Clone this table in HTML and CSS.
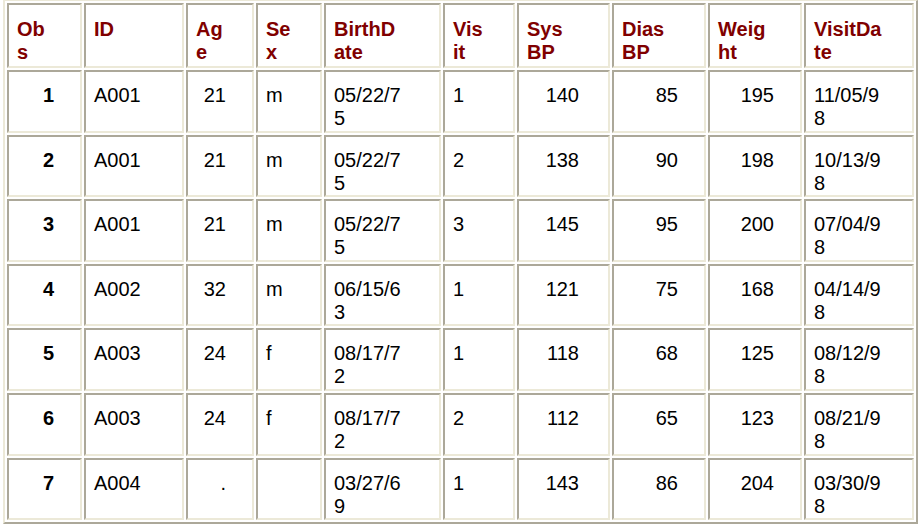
FILE: index.html
```html
<!DOCTYPE html>
<html>
<head>
<meta charset="utf-8">
<link rel="stylesheet" href="styles.css">
</head>
<body>
<table class="data">
  <colgroup>
    <col class="c-obs"><col class="c-id"><col class="c-age"><col class="c-sex"><col class="c-bd"><col class="c-visit"><col class="c-sys"><col class="c-dias"><col class="c-wt"><col class="c-vd">
  </colgroup>
  <thead>
    <tr class="head">
      <th>Obs</th><th>ID</th><th>Age</th><th>Sex</th><th class="bd">BirthDate</th><th>Visit</th><th class="sys">SysBP</th><th>DiasBP</th><th>Weight</th><th>VisitDate</th>
    </tr>
  </thead>
  <tbody>
    <tr><th class="obs">1</th><td>A001</td><td class="r">21</td><td>m</td><td class="bd">05/22/75</td><td>1</td><td class="r sys">140</td><td class="r">85</td><td class="r">195</td><td>11/05/98</td></tr>
    <tr><th class="obs">2</th><td>A001</td><td class="r">21</td><td>m</td><td class="bd">05/22/75</td><td>2</td><td class="r sys">138</td><td class="r">90</td><td class="r">198</td><td>10/13/98</td></tr>
    <tr><th class="obs">3</th><td>A001</td><td class="r">21</td><td>m</td><td class="bd">05/22/75</td><td>3</td><td class="r sys">145</td><td class="r">95</td><td class="r">200</td><td>07/04/98</td></tr>
    <tr><th class="obs">4</th><td>A002</td><td class="r">32</td><td>m</td><td class="bd">06/15/63</td><td>1</td><td class="r sys">121</td><td class="r">75</td><td class="r">168</td><td>04/14/98</td></tr>
    <tr><th class="obs">5</th><td>A003</td><td class="r">24</td><td>f</td><td class="bd">08/17/72</td><td>1</td><td class="r sys">118</td><td class="r">68</td><td class="r">125</td><td>08/12/98</td></tr>
    <tr><th class="obs">6</th><td>A003</td><td class="r">24</td><td>f</td><td class="bd">08/17/72</td><td>2</td><td class="r sys">112</td><td class="r">65</td><td class="r">123</td><td>08/21/98</td></tr>
    <tr><th class="obs">7</th><td>A004</td><td class="r">.</td><td></td><td class="bd">03/27/69</td><td>1</td><td class="r sys">143</td><td class="r">86</td><td class="r">204</td><td>03/30/98</td></tr>
  </tbody>
</table>
</body>
</html>
```

FILE: styles.css
```css
html, body {
  background: #ffffff;
}
body {
  margin: 0 0 0 3px;
  font-family: "Liberation Sans", Arial, sans-serif;
  font-size: 20px;
}
.data {
  table-layout: fixed;
  width: 915px;
  border-collapse: separate;
  border-spacing: 2px;
  border-style: solid;
  border-width: 1px 2px 2px 2px;
  border-color: #ece9d8 #aca899 #aca899 #ece9d8;
  background: #ffffff;
}
.c-obs { width: 75px; }
.c-id { width: 100px; }
.c-age { width: 68px; }
.c-sex { width: 66px; }
.c-bd { width: 117px; }
.c-visit { width: 72px; }
.c-sys { width: 93px; }
.c-dias { width: 94px; }
.c-wt { width: 94px; }
.c-vd { width: 110px; }

.data th, .data td {
  border-style: solid;
  border-width: 2px;
  border-color: #aca899 #ece9d8 #ece9d8 #aca899;
  padding: 12px 26px 0 8px;
  vertical-align: top;
  text-align: left;
  line-height: normal;
  word-break: break-all;
  overflow-wrap: anywhere;
  color: #000000;
  font-weight: normal;
}
.data .head {
  height: 65px;
}
.data .head th {
  color: #800000;
  font-weight: bold;
  padding-top: 13px;
}
.data .head th.sys {
  padding-right: 36px;
}
.data tbody tr {
  height: 62.6px;
}
.data th.obs {
  font-weight: bold;
  text-align: right;
}
.data td.r {
  text-align: right;
}
.data td.sys {
  padding-right: 29px;
}
.data .bd {
  padding-right: 35px;
}
```
